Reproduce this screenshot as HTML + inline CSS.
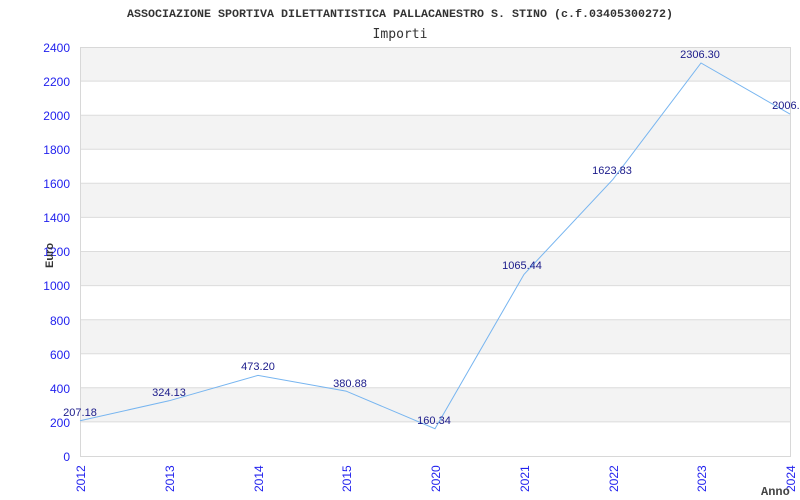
<!DOCTYPE html>
<html><head><style>body{margin:0;background:#fff}svg{display:block}</style></head><body>
<svg width="800" height="500" xmlns="http://www.w3.org/2000/svg">
<text x="400" y="17" text-anchor="middle" font-family="Liberation Mono, monospace" font-size="11" font-weight="bold" fill="#333" textLength="546" lengthAdjust="spacingAndGlyphs">ASSOCIAZIONE SPORTIVA DILETTANTISTICA PALLACANESTRO S. STINO (c.f.03405300272)</text>
<text x="400" y="38" text-anchor="middle" font-family="DejaVu Sans Mono, monospace" font-size="13" fill="#333" textLength="55" lengthAdjust="spacingAndGlyphs">Importi</text>
<g fill="#f3f3f3">
<rect x="80" y="47" width="710" height="34.1"/>
<rect x="80" y="115.2" width="710" height="34.1"/>
<rect x="80" y="183.3" width="710" height="34.1"/>
<rect x="80" y="251.5" width="710" height="34.1"/>
<rect x="80" y="319.7" width="710" height="34.1"/>
<rect x="80" y="387.8" width="710" height="34.1"/>
</g>
<g stroke="#dcdcdc" stroke-width="1">
<line x1="80" y1="81.1" x2="790" y2="81.1"/><line x1="80" y1="115.2" x2="790" y2="115.2"/>
<line x1="80" y1="149.3" x2="790" y2="149.3"/><line x1="80" y1="183.3" x2="790" y2="183.3"/>
<line x1="80" y1="217.4" x2="790" y2="217.4"/><line x1="80" y1="251.5" x2="790" y2="251.5"/>
<line x1="80" y1="285.6" x2="790" y2="285.6"/><line x1="80" y1="319.7" x2="790" y2="319.7"/>
<line x1="80" y1="353.8" x2="790" y2="353.8"/><line x1="80" y1="387.8" x2="790" y2="387.8"/>
<line x1="80" y1="421.9" x2="790" y2="421.9"/>
</g>
<rect x="80.5" y="47.5" width="710" height="409" fill="none" stroke="#d8d8d8"/>
<g font-family="Liberation Sans, sans-serif" font-size="12" fill="#2222ee" text-anchor="end">
<text x="70" y="52">2400</text><text x="70" y="86">2200</text><text x="70" y="120">2000</text>
<text x="70" y="154">1800</text><text x="70" y="188">1600</text><text x="70" y="222">1400</text>
<text x="70" y="256">1200</text><text x="70" y="290">1000</text><text x="70" y="325">800</text>
<text x="70" y="359">600</text><text x="70" y="393">400</text><text x="70" y="427">200</text>
<text x="70" y="461">0</text>
</g>
<text transform="translate(53,268) rotate(-90)" font-family="Liberation Sans, sans-serif" font-size="11" font-weight="bold" fill="#333">Euro</text>
<g font-family="Liberation Sans, sans-serif" font-size="12" fill="#2222ee">
<text transform="translate(85,492) rotate(-90)">2012</text>
<text transform="translate(174,492) rotate(-90)">2013</text>
<text transform="translate(263,492) rotate(-90)">2014</text>
<text transform="translate(351,492) rotate(-90)">2015</text>
<text transform="translate(440,492) rotate(-90)">2020</text>
<text transform="translate(529,492) rotate(-90)">2021</text>
<text transform="translate(618,492) rotate(-90)">2022</text>
<text transform="translate(706,492) rotate(-90)">2023</text>
<text transform="translate(795,492) rotate(-90)">2024</text>
</g>
<text x="761" y="495" font-family="Liberation Mono, monospace" font-size="12" font-weight="bold" fill="#444">Anno</text>
<polyline fill="none" stroke="#77b5f0" stroke-width="1" points="80,420.7 169,400.8 258,375.4 346,391.1 435,428.7 524,274.4 613,179.3 701,63 790,114.1"/>
<g font-family="Liberation Sans, sans-serif" font-size="11" fill="#1a1a8a" text-anchor="middle">
<text x="80" y="416">207.18</text><text x="169" y="396">324.13</text><text x="258" y="370">473.20</text>
<text x="350" y="387">380.88</text><text x="434" y="424">160.34</text><text x="522" y="269">1065.44</text>
<text x="612" y="174">1623.83</text><text x="700" y="58">2306.30</text><text x="789" y="109">2006.2</text>
</g>
</svg>
</body></html>
